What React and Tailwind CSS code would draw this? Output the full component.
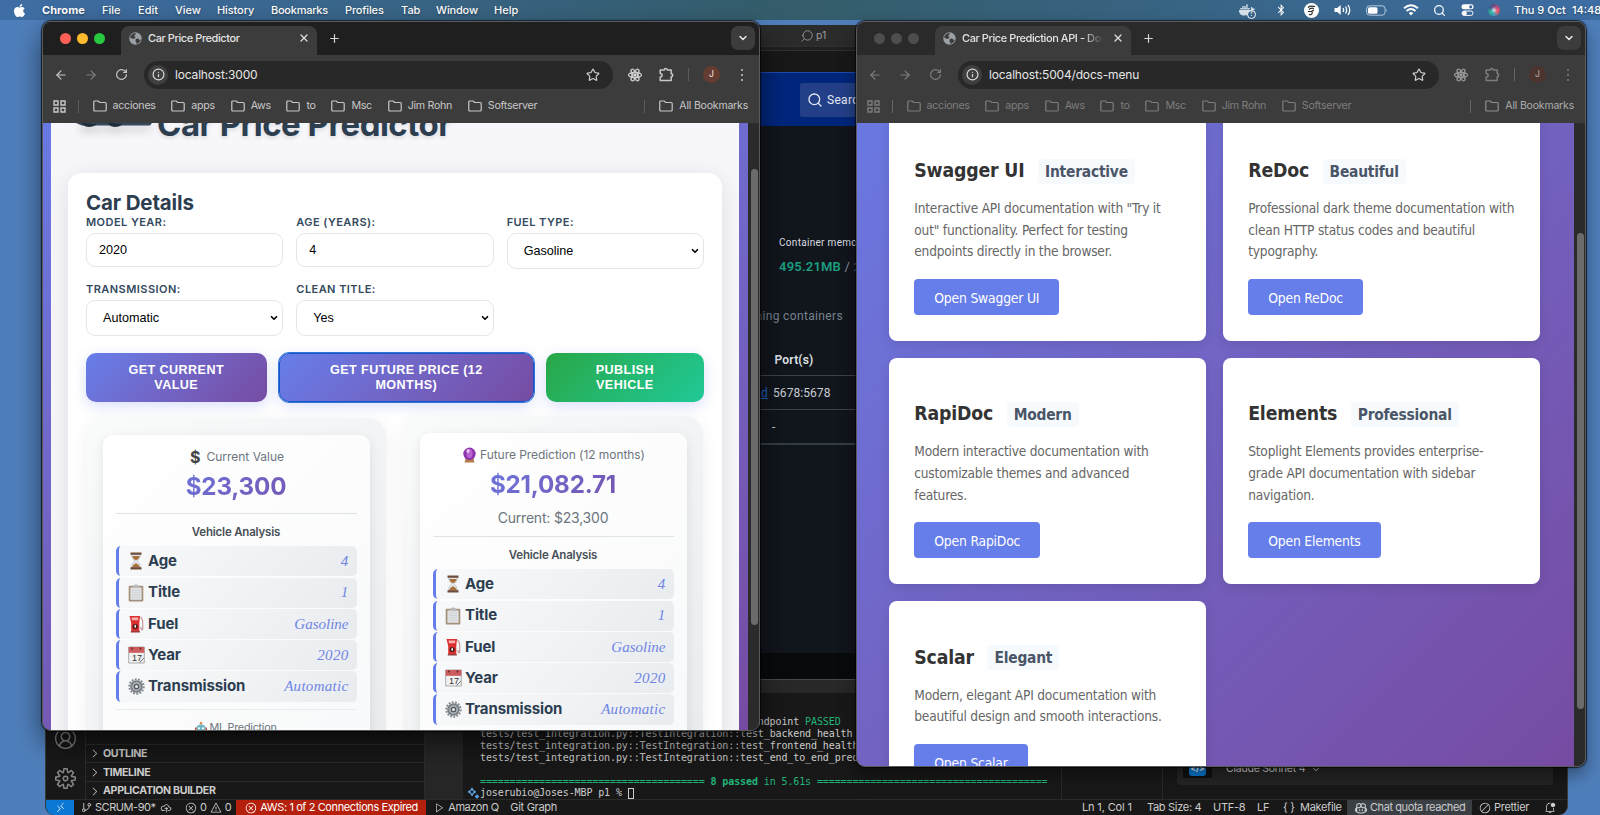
import React from "react";
import { LuArrowLeft, LuArrowRight, LuRotateCw, LuInfo, LuStar, LuX, LuPlus, LuChevronDown, LuSearch, LuGitBranch } from "react-icons/lu";
import { VscError, VscWarning, VscBellDot, VscAccount, VscSettingsGear, VscChevronRight, VscRemote, VscCloudUpload, VscCopilot, VscCircleSlash, VscPlay, VscChevronDown } from "react-icons/vsc";
import { FaApple, FaDocker, FaBluetoothB, FaReact } from "react-icons/fa";

const Folder = () => (
  <svg className="shrink-0" width="14" height="12" viewBox="0 0 14 12" fill="none" stroke="currentColor" strokeWidth="1.2">
    <path d="M.8 10V2Q.8 1 1.8 1h3.4l1.4 1.5h5.6q1 0 1 1V10q0 1-1 1H1.8q-1 0-1-1z" />
  </svg>
);

const Globe = () => (
  <svg width="13" height="13" viewBox="0 0 13 13">
    <circle cx="6.5" cy="6.5" r="6.2" fill="#9aa0a6" />
    <path d="M1 5.2C2 2.6 4.4 1 7 1.4 6.9 2.8 5.6 2.8 5.3 3.7 5 4.8 6.8 4.6 6.5 5.7 6.2 6.8 4.6 6 4 7 3 6.6 2 5.6 1 5.2zM7 7.1c1.5-1 2.4-.7 3.2.4.4.8 1 .4 1.7-.2-.4 2.2-2 4.1-4.4 4.6C7.8 10 5.5 9.600 7 7.1z" fill="#3c3c3c" />
  </svg>
);

const Puzzle = () => (
  <svg width="15" height="15" viewBox="0 0 15 15" fill="none" stroke="currentColor" strokeWidth="1.5" strokeLinejoin="round">
    <path d="M1.200 3h4.100a1.500 1.500 0 0 1 3 0h3.900v3.700a1.500 1.500 0 0 1 0 3v3.800h-11v-3.500c2.600 0 2.600-3.400 0-3.400z" />
  </svg>
);

const MARKS = ["acciones", "apps", "Aws", "to", "Msc", "Jim Rohn", "Softserver"];

function Browser({ title, url, active, children }) {
  const dim = active ? "text-[#c7c7c7]" : "text-[#7d7d7d]";
  const sep = active ? "bg-[#5c5c5c]" : "bg-[#666666]";
  return (
    <div className="flex h-full w-full flex-col overflow-hidden rounded-[9px] border border-[#5a5a5a] bg-[#3c3c3c] font-['Inter',sans-serif]">
      <div className={"flex h-[33px] shrink-0 items-end " + (active ? "bg-[#1f1f1f]" : "bg-[#2a2a2a]")}>
        <div className="flex h-full w-[78px] shrink-0 items-center gap-[6.5px] pl-[17px]">
          <i className={"h-[10.500px] w-[10.500px] rounded-full " + (active ? "bg-[#ff5f57]" : "bg-[#4d4d4d]")} />
          <i className={"h-[10.500px] w-[10.500px] rounded-full " + (active ? "bg-[#febc2e]" : "bg-[#4d4d4d]")} />
          <i className={"h-[10.500px] w-[10.500px] rounded-full " + (active ? "bg-[#28c840]" : "bg-[#4d4d4d]")} />
        </div>
        <div className="flex h-[29px] w-[196px] items-center rounded-t-[8px] bg-[#3c3c3c] pb-[5px] pl-[8px] pr-[7px]">
          <Globe />
          <span className={"ml-[6px] overflow-hidden whitespace-nowrap text-[11px] font-medium text-[#e3e3e3] " + (active ? "w-[140px] tracking-[-0.420px]" : "w-[141px] tracking-[-0.420px] [mask-image:linear-gradient(90deg,#000_86%,transparent)]")}>{title}</span>
          <LuX size={12} strokeWidth={2.5} className="ml-auto shrink-0 text-[#dedede]" />
        </div>
        <LuPlus size={13} strokeWidth={2.200} className="mb-[10px] ml-[11px] text-[#d6d6d6]" />
        <div className="mb-[5px] ml-auto mr-[4px] flex h-[24px] w-[24px] items-center justify-center rounded-[7px] bg-[#3c3c3c] text-[#e8e8e8]"><LuChevronDown size={12} strokeWidth={3} /></div>
      </div>
      <div className={"flex h-[38px] shrink-0 items-center pt-px " + dim}>
        <LuArrowLeft size={14} strokeWidth={2} className="ml-[11px]" />
        <LuArrowRight size={14} strokeWidth={2} className={"ml-[16px] " + (active ? "text-[#7f7f7f]" : "")} />
        <LuRotateCw size={13} strokeWidth={2.200} className="ml-[17px]" />
        <div className="ml-[16px] mr-[15px] flex h-[28px] flex-1 items-center rounded-full bg-[#282828] pl-[4px] pr-[13px]">
          <div className="flex h-[20px] w-[20px] items-center justify-center rounded-full bg-[#3f3f3f] text-[#d9d9d9]"><LuInfo size={13} strokeWidth={2.200} /></div>
          <span className="ml-[7px] text-[12px] tracking-[-0.170px] text-[#e6e6e6]">{url}</span>
          <LuStar size={14} strokeWidth={2} className="ml-auto text-[#cfcfcf]" />
        </div>
        <div className="flex w-[131px] items-center">
          <FaReact size={14} strokeWidth={24} stroke="currentColor" className={active ? "text-[#dedede]" : "text-[#a0a0a0]"} />
          <span className="ml-[17px]"><Puzzle /></span>
          <span className={"ml-[14px] h-[13px] w-px " + sep} />
          <span className={"ml-[14px] flex h-[17px] w-[17px] items-center justify-center rounded-full text-[8.500px] font-medium " + (active ? "bg-[#643c31] text-[#e5d5d0]" : "bg-[#4c352f] text-[#a89c98]")}>J</span>
          <span className="ml-[21px] flex flex-col gap-[3px]">
            <i className="h-[2px] w-[2px] rounded-full bg-current" /><i className="h-[2px] w-[2px] rounded-full bg-current" /><i className="h-[2px] w-[2px] rounded-full bg-current" />
          </span>
        </div>
      </div>
      <div className={"flex h-[30px] shrink-0 items-center pb-[4px] pl-[10px] pr-[11px] " + dim}>
        <svg width="13" height="13" viewBox="0 0 13 13" fill="none" stroke="currentColor" strokeWidth="1.400"><path d="M1 1h4v4H1zM8 1h4v4H8zM1 8h4v4H1zM8 8h4v4H8z" /></svg>
        <span className={"ml-[12px] mr-[13.500px] h-[13px] w-px " + sep} />
        <div className="flex gap-[15.600px]">
          {MARKS.map((m) => (
            <span key={m} className="flex items-center gap-[6.100px] whitespace-nowrap text-[10.700px] leading-[16px] tracking-[-0.290px]"><Folder />{m}</span>
          ))}
        </div>
        <span className={"ml-auto mr-[14px] h-[13px] w-px " + sep} />
        <span className={"flex items-center gap-[6px] whitespace-nowrap text-[10.500px] leading-[16px] tracking-[-0.180px] " + (active ? "" : "text-[#8f8f8f]")}><Folder /><span className={active ? "" : "text-[#ababab]"}>All Bookmarks</span></span>
      </div>
      <div className="flex min-h-0 flex-1">{children}</div>
    </div>
  );
}

const Hourglass = () => (
  <svg width="16" height="18" viewBox="0 0 16 18">
    <path d="M3.500 2.500h9q0 4-3.600 6.500 3.600 2.500 3.600 6.500h-9q0-4 3.600-6.500-3.600-2.500-3.600-6.500z" fill="#e8ebee" stroke="#a9adb0" strokeWidth=".6" />
    <path d="M4.200 4h7.600Q11 7 8 8.300 5 7 4.200 4zM8 11q3.500 2 4.200 4.500H3.800Q4.500 13 8 11z" fill="#a9703c" />
    <path d="M2.500.5h11v2.200h-11zM2.500 15.300h11v2.200h-11z" fill="#6f4c3b" />
  </svg>
);
const Clip = () => (
  <svg width="16" height="18" viewBox="0 0 16 18">
    <rect x=".7" y="1.800" width="14.600" height="15.700" rx="1" fill="#a5907a" />
    <path d="M2.400 3.500h11.200v12.300H2.400z" fill="#dfe1e3" /><path d="M4 6h8M4 8.300h8M4 10.600h8M4 13h8" stroke="#cbced2" strokeWidth=".7" />
    <path d="M5 1.500q3-2 6 0l.5 1.800h-7z" fill="#b9bcc0" />
  </svg>
);
const Pump = () => (
  <svg width="16" height="18" viewBox="0 0 16 18">
    <path d="M1.500 1h10.500l-.7 7v9H3.200V8z" fill="#dc2f2f" /><path d="M3.500 2.500h6.800l-.3 2.800H4z" fill="#f6b3ae" />
    <path d="M12.300 2q2.700 2 2.400 6.500v6q-1.700 1-1.700-2.500" fill="none" stroke="#c99a9a" strokeWidth="1.200" />
    <circle cx="7.200" cy="11.500" r="2.600" fill="#4a1a1a" /><path d="M7.200 9.500q1.800 2 0 3.600-1.800-1.600 0-3.600" fill="#fff" /><path d="M2.800 16h9v1.500h-9z" fill="#91413d" />
  </svg>
);
const Calendar = () => (
  <svg width="17" height="18" viewBox="0 0 17 18">
    <path d="M.7 1h15.600v16H.7z" fill="#f1f1f1" stroke="#9b9b9b" strokeWidth=".8" /><path d="M.7 1h15.600v5.800H.7z" fill="#cc5b5d" />
    <path d="M4 1.500v2M12.500 1.500v2" stroke="#5c2226" strokeWidth="1.400" />
    <text x="4" y="15.300" fontSize="9" fontFamily="Liberation Sans" fill="#333">17</text><path d="M11.500 16.500l4.500-4.500" stroke="#666" strokeWidth=".9" />
  </svg>
);
const Gear = () => (
  <svg width="17" height="17" viewBox="0 0 17 17">
    <circle cx="8.500" cy="8.500" r="7.200" fill="none" stroke="#83898e" strokeWidth="2" strokeDasharray="1.800 1.400" />
    <circle cx="8.500" cy="8.500" r="5.300" fill="#b3b8bc" stroke="#7b8186" strokeWidth="2" />
    <circle cx="8.500" cy="8.500" r="2.200" fill="#e6e8ea" stroke="#50565b" strokeWidth="1.300" />
  </svg>
);
const Crystal = () => (
  <svg width="13" height="16" viewBox="0 0 13 16">
    <path d="M2.500 12h8l1 3.500h-10z" fill="#b77a4b" /><circle cx="6.500" cy="6.800" r="6.200" fill="#8d35ad" />
    <ellipse cx="6.500" cy="6.500" rx="3" ry="4.500" fill="#b964d3" /><ellipse cx="5" cy="4" rx="1.600" ry="2" fill="#ebc4f3" />
  </svg>
);
const Robot = () => (
  <svg width="12" height="12" viewBox="0 0 12 12">
    <circle cx="6" cy="1.300" r="1.200" fill="#e37d35" /><path d="M1.500 6q0-3.500 4.500-3.500T10.500 6v5h-9z" fill="#6fb7c5" /><path d="M0 5.500h1.500v4H0zM10.500 5.500H12v4h-1.500z" fill="#b54e42" />
    <circle cx="4" cy="6.300" r="1.100" fill="#fff" /><circle cx="8" cy="6.300" r="1.100" fill="#fff" /><path d="M3 9h6v1.500H3z" fill="#34545e" />
  </svg>
);

const FACTS = [[Hourglass, "Age", "4"], [Clip, "Title", "1"], [Pump, "Fuel", "Gasoline"], [Calendar, "Year", "2020"], [Gear, "Transmission", "Automatic"]];

function Analysis() {
  return (
    <>
      <div className="h-[37px] pt-[11px] text-center text-[11.500px] font-semibold leading-[14px] tracking-[-0.200px] text-[#495057]">Vehicle Analysis</div>
      <div className="-mt-[4.700px] flex flex-col gap-[1.200px]">
        {FACTS.map(([Icon, k, v]) => (
          <div key={k} className="flex h-[30.100px] items-center rounded-[5px] border-l-[3px] border-[#667eea] bg-linear-135 from-[#f8f9fa] to-[#e9ecef] pl-[9px] pr-[8px]">
            <span className="flex w-[20.500px]"><Icon /></span>
            <span className="text-[15px] font-bold tracking-[-0.120px] text-[#2c3e50]">{k}</span>
            <span className={"ml-auto font-['Liberation_Serif',serif] text-[15px] italic text-[#7085e4] " + (k === "Fuel" ? "tracking-[0px]" : "tracking-[0.300px]")}>{v}</span>
          </div>
        ))}
      </div>
    </>
  );
}

function Field({ label, value, select }) {
  return (
    <div className="flex h-[67px] flex-col">
      <span className="h-[17px] whitespace-nowrap text-[11px] font-semibold leading-[12px] tracking-[0.450px] text-[#34495e]">{label}</span>
      <div className={"flex items-center rounded-[9px] border-[1.500px] border-[#e1e8ed] bg-white font-['Liberation_Sans',sans-serif] text-[12.600px] text-black " + (select ? "h-[36px] pl-[16px] pr-[3px]" : "h-[34px] pl-[12px] pt-px")}>
        {value}
        {select && <LuChevronDown size={10} strokeWidth={4} className="ml-auto" />}
      </div>
    </div>
  );
}

const BTN = "flex h-[49px] items-center justify-center rounded-[10px] text-center font-['Liberation_Sans',sans-serif] text-[12.600px] font-bold leading-[14.500px] tracking-[0.430px] text-white shadow-[0_4px_13px_rgba(102,126,234,0.25)] ";
const OUTER = "h-[330px] rounded-[18px] bg-linear-135 from-[#fafbfb] to-[#e9ecef] px-[16.500px] pt-[17px] shadow-[0_4px_18px_rgba(0,0,0,0.06)] ";
const INNER = "h-[320px] rounded-[10px] bg-linear-135 from-white to-[#f8f9fa] px-[13px] shadow-[0_3px_12px_rgba(0,0,0,0.09)] ";
const PRICE = "mx-auto w-full bg-linear-135 from-[#667eea] to-[#764ba2] bg-clip-text pt-px text-center text-[24.200px] font-bold leading-[30px] tracking-[-0.200px] text-transparent h-[30px] ";

function Predictor() {
  return (
    <>
      <div className="flex h-full w-[705px] justify-between overflow-hidden bg-linear-160 from-[#667eea] from-[-10%] to-[#764ba2]">
        <div className="ml-[8px] mr-[9px] flex-1 overflow-hidden bg-[#f7f6fb] px-[17px]">
          <div className="flex h-[50px] items-start pl-[8px]">
            <svg className="drop-shadow-[0_4px_5px_rgba(0,0,0,0.35)]" width="78" height="8" viewBox="0 0 78 8">
              <path d="M0 0h76l-2 2.500H6z" fill="#34495e" /><path d="M6 0q6 6 14 1M32 0q6 6 14 1" fill="#1e2b38" stroke="#22303e" strokeWidth="1.500" />
            </svg>
            <div className="-mt-[19px] ml-[3px] whitespace-nowrap text-[33px] font-bold leading-[40px] tracking-[-0.520px] text-[#2c3e50] [text-shadow:0_2px_4px_rgba(0,0,0,0.12)]">Car Price Predictor</div>
          </div>
          <div className="h-[620px] rounded-[14px] bg-white px-[18px] pt-[18px] shadow-[0_4px_24px_rgba(0,0,0,0.1)]">
            <div className="h-[25px] text-[20.500px] font-bold leading-[24px] tracking-[-0.150px] text-[#2c3e50]">Car Details</div>
            <div className="grid grid-cols-3 gap-x-[13px]">
              <Field label="MODEL YEAR:" value="2020" />
              <Field label="AGE (YEARS):" value="4" />
              <Field label="FUEL TYPE:" value="Gasoline" select />
              <Field label="TRANSMISSION:" value="Automatic" select />
              <Field label="CLEAN TITLE:" value="Yes" select />
            </div>
            <div className="mt-[3px] flex gap-[12.300px]">
              <div className={BTN + "w-[180.500px] bg-linear-135 from-[#667eea] to-[#764ba2]"}>GET CURRENT<br />VALUE</div>
              <div className={BTN + "w-[255px] border-[1.500px] border-[#1557c8] bg-linear-135 from-[#667eea] to-[#764ba2] outline-1 outline-[#3273d8]"}>GET FUTURE PRICE (12<br />MONTHS)</div>
              <div className={BTN + "w-[157.500px] bg-linear-135 from-[#28a745] to-[#20c997]"}>PUBLISH<br />VEHICLE</div>
            </div>
            <div className="mt-[14px] flex gap-[17px]">
              <div className={OUTER + "mt-[2px] w-[300px]"}>
                <div className={INNER}>
                  <div className="flex h-[36px] items-center justify-center gap-[6px] pl-[2px] pt-[7px] text-[12px] text-[#6c757d]"><b className="text-[16px] text-[#444]">$</b>Current Value</div>
                  <div className={PRICE}>$23,300</div>
                  <div className="mt-[12px] h-px bg-[#dfe3e7]" />
                  <Analysis />
                  <div className="mt-[7px] h-px bg-[#e9ecef]" />
                  <div className="flex items-center justify-center gap-[2px] pt-[11px] text-[10.800px] leading-[14px] tracking-[-0.250px] text-[#6c757d]"><Robot />ML Prediction</div>
                </div>
              </div>
              <div className={OUTER + "w-[300px]"}>
                <div className={INNER}>
                  <div className="flex h-[36px] items-center justify-center gap-[4px] whitespace-nowrap pl-[2px] pt-[7px] text-[12px] tracking-[-0.060px] text-[#6c757d]"><Crystal />Future Prediction (12 months)</div>
                  <div className={PRICE}>$21,082.71</div>
                  <div className="h-[37px] pt-[9px] text-center text-[14px] leading-[20px] tracking-[-0.200px] text-[#6c757d]">Current: $23,300</div>
                  <div className="h-px bg-[#dfe3e7]" />
                  <Analysis />
                </div>
              </div>
            </div>
          </div>
        </div>
      </div>
      <div className="flex flex-1 justify-end bg-[#2b2b2b] pr-[1px] pt-[46px]"><i className="h-[456px] w-[7px] rounded-full bg-[#6b6b6b]" /></div>
    </>
  );
}

const DOCS = [
  ["Swagger UI", "Interactive", ['Interactive API documentation with "Try it', 'out" functionality. Perfect for testing', "endpoints directly in the browser."]],
  ["ReDoc", "Beautiful", ["Professional dark theme documentation with", "clean HTTP status codes and beautiful", "typography."]],
  ["RapiDoc", "Modern", ["Modern interactive documentation with", "customizable themes and advanced", "features."]],
  ["Elements", "Professional", ["Stoplight Elements provides enterprise-", "grade API documentation with sidebar", "navigation."]],
  ["Scalar", "Elegant", ["Modern, elegant API documentation with", "beautiful design and smooth interactions."]],
];

function DocsMenu() {
  return (
    <>
      <div className="h-full w-[717px] overflow-hidden bg-linear-135 from-[#667eea] from-[-14%] to-[#764ba2] pl-[32.300px]">
        <div className="-mt-[8.500px] grid w-[651px] grid-cols-2 gap-x-[16.800px] gap-y-[16.800px] font-['DejaVu_Sans_Condensed','DejaVu_Sans',sans-serif] [font-stretch:condensed]">
          {DOCS.map(([t, b, lines]) => (
            <div key={t} className="flex h-[226.500px] flex-col items-start rounded-[8px] bg-white px-[25px] pt-[43.500px] shadow-[0_4px_12px_rgba(0,0,0,0.1)]">
              <div className="flex items-center gap-[13.500px]">
                <span className="text-[19.300px] font-bold leading-[26px] tracking-[-0.170px] text-[#333]">{t}</span>
                <span className="h-[25px] rounded-[4px] bg-[#f7fafc] px-[7px] text-[15.400px] font-bold leading-[26px] tracking-[-0.220px] text-[#4a5568]">{b}</span>
              </div>
              <div className="mt-[14px] whitespace-nowrap text-[13.600px] leading-[21.700px] tracking-[-0.200px] text-[#666]">
                {lines.map((l) => <div key={l}>{l}</div>)}
              </div>
              <div className="mt-[15.500px] h-[36.500px] rounded-[4px] bg-[#667eea] px-[20px] text-[13.800px] leading-[38px] tracking-[-0.200px] text-white">Open {t}</div>
            </div>
          ))}
        </div>
      </div>
      <div className="flex flex-1 justify-end bg-[#2b2b2b] pr-[1px] pt-[110px]"><i className="h-[476px] w-[7px] rounded-full bg-[#6b6b6b]" /></div>
    </>
  );
}

const Wifi = () => (
  <svg width="16" height="12" viewBox="0 0 16 12" fill="none" stroke="#fff" strokeWidth="1.900"><path d="M1 4.200q7-6 14 0M3.500 6.900q4.500-3.800 9 0" /><path d="M5.700 9q2.300-1.900 4.600 0L8 11.400z" fill="#fff" stroke="none" /></svg>
);

function MenuBar() {
  return (
    <div className="flex h-[20px] items-center bg-linear-90 from-[#3f6ea6] via-[#345c69] to-[#3d6da3] pl-[12px] font-['Inter',sans-serif] text-[11px] font-medium text-white [text-shadow:0_1px_2px_rgba(0,0,0,0.35)]">
      <FaApple size={15} />
      <b className="ml-[15px] w-[60px] tracking-[0.050px]">Chrome</b>
      <span className="w-[36px]">File</span><span className="w-[37px]">Edit</span><span className="w-[42px]">View</span>
      <span className="w-[54px] tracking-[-0.100px]">History</span><span className="w-[74px] tracking-[-0.250px]">Bookmarks</span><span className="w-[56px] tracking-[-0.150px]">Profiles</span>
      <span className="w-[35px]">Tab</span><span className="w-[58px] tracking-[-0.150px]">Window</span><span>Help</span>
      <div className="ml-auto flex items-center">
        <span className="relative mr-[20px] flex text-[#d5e0ea]"><FaDocker size={16} /><i className="absolute -bottom-[1px] -right-[1px] flex h-[9px] w-[9px] items-center justify-center rounded-full border border-white bg-[#3a6690] text-[7px] font-bold not-italic">!</i></span>
        <FaBluetoothB size={12} className="mr-[17px]" />
        <span className="mr-[15px] flex h-[15px] w-[15px] items-center justify-center rounded-full bg-white">
          <svg width="9" height="11" viewBox="0 0 9 11" fill="none" stroke="#222" strokeWidth="1.100"><path d="M1 2.500Q3 .5 8 1.500M2 4.500q2-2 5-1M2 9.500q4 1 3-3.500L7 5M1 6.500h3.500" /></svg>
        </span>
        <svg className="mr-[14px]" width="18" height="12" viewBox="0 0 18 12" fill="none" stroke="#fff" strokeWidth="1.300"><path d="M.5 4h2.700l3.500-3v10L3.200 8H.5z" fill="#fff" stroke="none" /><path d="M9 4q1.300 2 0 4M11.500 2.500q2.300 3.500 0 7M14 1q3.500 5 0 10" /></svg>
        <svg className="mr-[15px]" width="22" height="11" viewBox="0 0 22 11"><rect x=".6" y=".8" width="18.500" height="9.400" rx="3" fill="none" stroke="#b6cadd" strokeWidth="1" /><rect x="2" y="2.200" width="9.500" height="6.600" rx="1.500" fill="#fff" /><path d="M20.300 3.800q1.400 1.700 0 3.400z" fill="#b6cadd" /></svg>
        <Wifi />
        <LuSearch size={13} strokeWidth={2.300} className="ml-[14px] mr-[15px]" />
        <svg className="mr-[14px]" width="13" height="12" viewBox="0 0 13 12"><rect x=".5" y=".3" width="12" height="5" rx="2.500" fill="#fff" /><circle cx="9.700" cy="2.800" r="1.600" fill="#3b6797" /><rect x="1" y="7" width="11" height="4.400" rx="2.200" fill="none" stroke="#fff" /><circle cx="3.600" cy="9.200" r="2.200" fill="#fff" /></svg>
        <span className="mr-[14px] flex h-[12px] w-[12px] items-center justify-center rounded-full bg-[conic-gradient(#6b4a80,#c64a75,#e35a64,#3f9fc4,#2bb59a,#3c5b90,#6b4a80)]"><i className="h-[4px] w-[4px] rounded-full bg-white/90 blur-[1px]" /></span>
        <span className="w-[58px] whitespace-nowrap">Thu 9 Oct</span><span className="w-[28px] overflow-hidden whitespace-nowrap">14:48</span>
      </div>
    </div>
  );
}

const Sparkle = () => (
  <svg width="13" height="12" viewBox="0 0 13 12" fill="none" stroke="#5aa0dd" strokeWidth="1.200"><path d="M5 .8Q5.500 4 8.800 4.800 5.500 5.500 5 8.800 4.500 5.500 1 4.800 4.500 4 5 .8z" /><path d="M10 7.500q.2 1.600 2 2-1.800.4-2 2-.2-1.600-2-2 1.800-.4 2-2z" fill="#5aa0dd" /></svg>
);

function Editor() {
  const line = "tests/test_integration.py::TestIntegration::";
  return (
    <div className="flex h-full flex-col overflow-hidden rounded-b-[9px] border-x border-[#3a3a3a] bg-[#181818] font-['Inter',sans-serif] text-[#cccccc]">
      <div className="flex h-[21px] shrink-0 items-center bg-[#2b2b2b] pl-[754px] text-[10.500px] text-[#9b9b9b]"><LuSearch size={14} strokeWidth={1.500} className="mr-[2px] -scale-x-100" />p1</div>
      <div className="h-[5px] shrink-0 border-y border-[#303030] bg-[#1f1f1f]" />
      <div className="h-[628px] shrink-0 bg-[#181818]" />
      <div className="h-[14px] shrink-0 bg-[#282828]" />
      <div className="flex min-h-0 flex-1">
        <div className="flex w-[40px] flex-col items-center border-r border-[#2b2b2b] pt-[35px] text-[#868686]"><VscAccount size={21} /><VscSettingsGear size={21} className="mt-[19px]" /></div>
        <div className="w-[339px] border-r border-[#2b2b2b] pt-[50.500px] text-[10.600px] font-bold tracking-[-0.320px]">
          {["OUTLINE", "TIMELINE", "APPLICATION BUILDER"].map((s) => (
            <div key={s} className="flex h-[18.700px] items-center border-t border-[#2b2b2b] pl-[2px] pt-px"><VscChevronRight size={13} className="mr-[2px]" />{s}</div>
          ))}
        </div>
        <div className="w-[38px] bg-[#262626]" />
        <div className="w-[598px] pt-[23px] font-['DejaVu_Sans_Mono',monospace] text-[10px] leading-[11.900px] tracking-[-0.110px]">
          <div className="whitespace-pre pl-[17px]">{"test_prediction_endpoint".padStart(54)} <span className="text-[#22b57a]">PASSED</span></div>
          <div className="whitespace-pre pl-[17px]">{line}test_backend_health</div>
          <div className="whitespace-pre pl-[17px]">{line}test_frontend_health</div>
          <div className="whitespace-pre pl-[17px]">{line}test_end_to_end_prediction</div>
          <div className="mt-[11.900px] whitespace-pre pl-[17px] text-[#22b57a]">{"=".repeat(38)} <b>8 passed</b> in 5.61s {"=".repeat(39)}</div>
          <div className="flex items-center whitespace-pre pl-[4px]"><Sparkle />joserubio@Joses-MBP p1 % <i className="h-[11px] w-[6px] border border-[#cccccc]" /></div>
        </div>
        <div className="w-[102px] border-x border-[#2b2b2b]" />
        <div className="flex-1 px-[14px]">
          <div className="flex h-[92px] items-end rounded-[3px] bg-[#252525] pb-[7px] pl-[6px] pr-[4px]">
            <div className="flex h-[24px] w-[29px] items-end justify-center bg-[#111] pb-[2px]"><i className="flex h-[17px] w-[17px] items-center justify-center rounded-[3px] bg-[#0a78d0] text-[8px] font-bold not-italic text-white">&lt;/&gt;</i></div>
            <span className="mb-[2px] ml-[14px] text-[10.500px] leading-[14px] tracking-[-0.220px]">Claude Sonnet 4</span><VscChevronDown size={10} className="mb-[4px] ml-[6px]" />
          </div>
        </div>
      </div>
      <div className="flex h-[16px] shrink-0 items-center whitespace-nowrap border-t border-[#2b2b2b] text-[11px] tracking-[-0.300px]">
        <div className="mr-[7px] flex h-full w-[28px] items-center justify-center bg-[#0b78d4] text-white"><VscRemote size={11} /></div>
        <LuGitBranch size={11} /><span className="ml-[3px] w-[65px] tracking-[-0.450px]">SCRUM-90*</span><VscCloudUpload size={12} />
        <VscError size={12} className="ml-[13px] mr-[3px]" />0<VscWarning size={12} className="ml-[3px] mr-[3px]" />0
        <div className="ml-[5px] flex h-full w-[190px] items-center gap-[3px] bg-[#b5200d] pl-[9px] tracking-[-0.400px] text-white"><VscError size={12} />AWS: 1 of 2 Connections Expired</div>
        <VscPlay size={11} className="ml-[8px] mr-[3px]" /><span className="w-[62px] tracking-[-0.450px]">Amazon Q</span><span>Git Graph</span>
        <span className="ml-auto w-[65px] tracking-[-0.150px]">Ln 1, Col 1</span><span className="w-[66px]">Tab Size: 4</span><span className="w-[44px]">UTF-8</span><span className="w-[26px]">LF</span><span className="w-[17px]">{"{ }"}</span><span className="w-[47px]">Makefile</span>
        <div className="flex h-full w-[125px] items-center gap-[3px] bg-[#3a3f44] pl-[8px] tracking-[-0.420px]"><VscCopilot size={12} />Chat quota reached</div>
        <VscCircleSlash size={12} className="ml-[7px] mr-[3px]" /><span className="w-[50px]">Prettier</span><VscBellDot size={12} className="mr-[11px]" />
      </div>
    </div>
  );
}

function DockerDesktop() {
  return (
    <div className="flex h-full flex-col overflow-hidden border-b border-[#4a4a4a] bg-[#11151c] font-['Roboto',sans-serif] tracking-[0.300px] text-[#c9ced4]">
      <div className="flex h-[54px] shrink-0 items-center border-t border-[#1c4bb0] bg-[#00267c] pl-[100px]"><div className="flex h-[34px] w-full items-center rounded-[2px] bg-[#233f87] pl-[7px] text-[12px] text-[#e4e9f5]"><LuSearch size={16} strokeWidth={2} className="mr-[4px]" />Search</div></div>
      <div className="whitespace-nowrap pl-[79px] pt-[110px] text-[10px] leading-[14px] text-[#dadde1]">Container memory usage</div>
      <div className="whitespace-nowrap pl-[79px] pt-[8px] text-[13px] leading-[18px] text-[#8b939c]"><b className="font-semibold tracking-[0.200px] text-[#1b9f80]">495.21MB</b> / 2GB</div>
      <div className="flex w-[143px] justify-end whitespace-nowrap pt-[32px] text-[12px] leading-[16px] tracking-[0.350px] text-[#78828e]">Showing running containers</div>
      <div className="h-[52px] border-b border-[#3b424b] pl-[74.500px] pt-[28px] text-[12px] font-semibold leading-[16px] tracking-[0.200px] text-[#dfe3e7]">Port(s)</div>
      <div className="flex h-[34px] items-center border-b border-[#3b424b] pl-[61px] text-[12px] tracking-[0.070px]"><u className="w-[12px] text-[#1f62bd]">d</u>5678:5678</div>
      <div className="flex h-[35px] items-center border-b-2 border-[#343c45] pl-[72px] text-[12px]">-</div>
      <div className="flex-1" />
      <div className="h-[26px] shrink-0 bg-[#080a0d]" />
    </div>
  );
}

export default function App() {
  return (
    <div className="relative h-[815px] w-[1600px] overflow-hidden bg-[#4f7fbb]">
      <MenuBar />
      <div className="absolute left-[45px] top-[25px] h-[790px] w-[1523px]"><Editor /></div>
      <div className="absolute left-[700px] top-[72px] h-[608px] w-[300px]"><DockerDesktop /></div>
      <div className="absolute left-[42px] top-[21px] h-[710px] w-[718px] rounded-[9px] shadow-[0_0_1px_1px_rgba(0,0,0,0.7),0_12px_28px_rgba(0,0,0,0.55)]">
        <Browser title="Car Price Predictor" url="localhost:3000" active><Predictor /></Browser>
      </div>
      <div className="absolute left-[856px] top-[21px] h-[746px] w-[730px] rounded-[9px] shadow-[0_0_1px_1px_rgba(0,0,0,0.7),0_8px_18px_rgba(0,0,0,0.4)]">
        <Browser title="Car Price Prediction API - Documentation" url="localhost:5004/docs-menu"><DocsMenu /></Browser>
      </div>
    </div>
  );
}
